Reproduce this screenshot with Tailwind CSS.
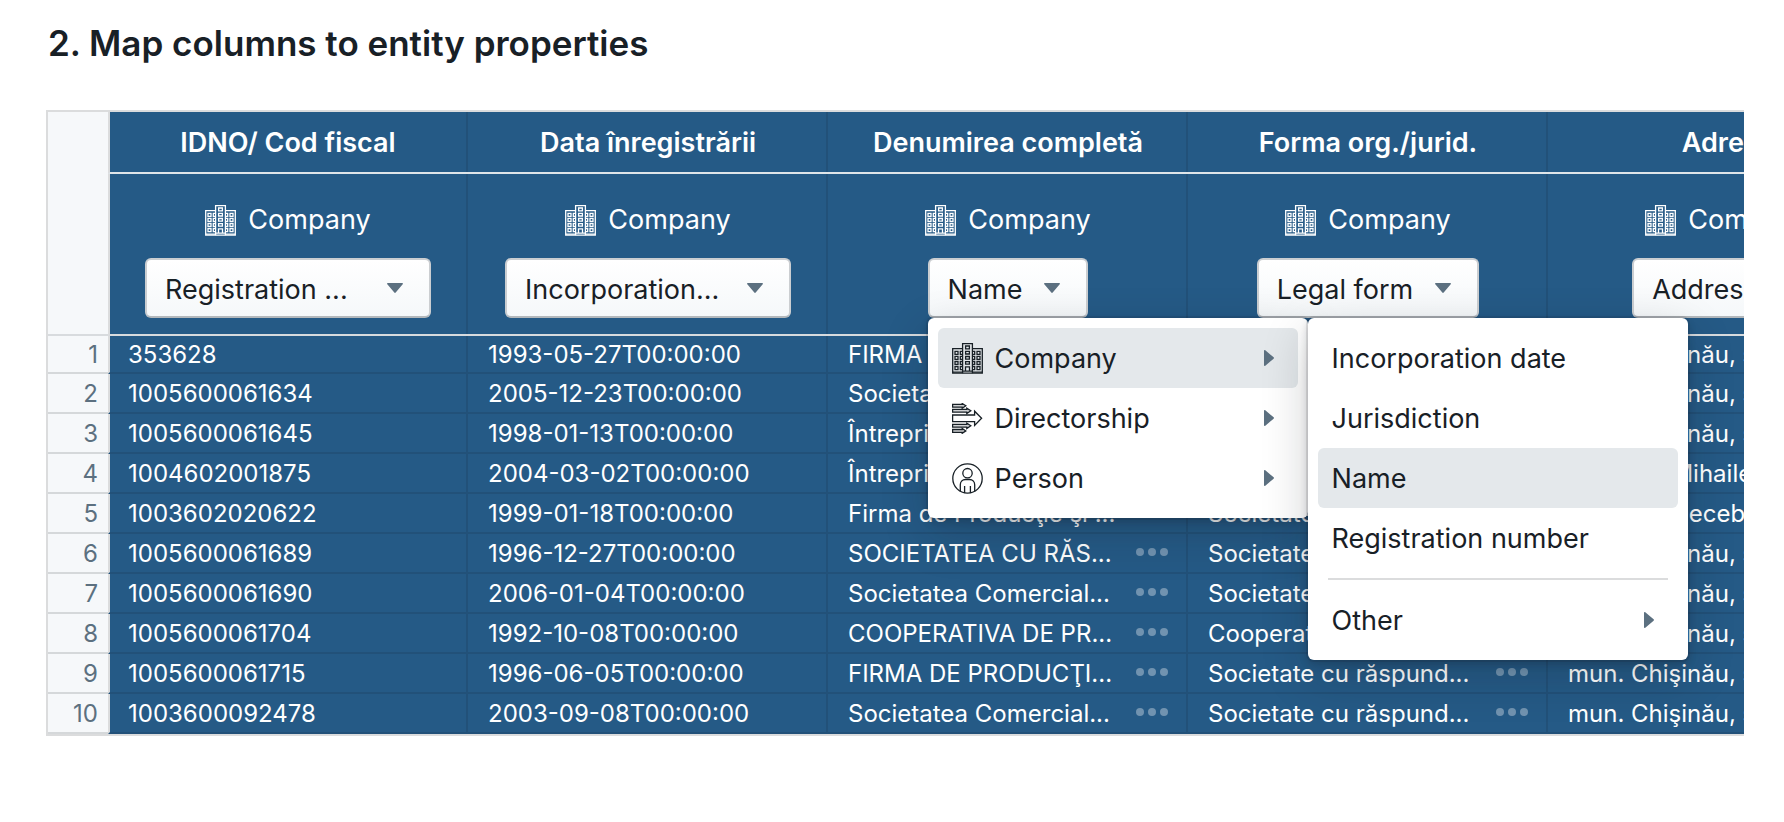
<!DOCTYPE html>
<html lang="en">
<head>
<meta charset="utf-8">
<title>Map columns to entity properties</title>
<script src="https://cdn.jsdelivr.net/npm/@tailwindcss/browser@4"></script>
</head>
<body class="bg-white font-['Inter','Noto_Sans',sans-serif] text-[27px] leading-9 text-[#182026]">

<svg class="hidden" aria-hidden="true">
  <symbol id="company" viewBox="0 0 31 31">
    <g fill="none" stroke="currentColor" stroke-width="1.3">
      <path d="M10.5 5.600H.7v24.600h29.600V5.600h-9.800"/>
      <path d="M10.600 30.200V.7h9.800v29.500M.7 29.200h9.900M20.400 29.200h9.900"/>
      <path d="M3 8.300h3v3H3zM3 13.300h3v3H3zM3 18.500h3v3H3zM3 23.600h3v3H3z"/>
      <path d="M25 8.300h3v3h-3zM25 13.300h3v3h-3zM25 18.500h3v3h-3zM25 23.600h3v3h-3z"/>
      <path d="M10.600 8.300H8.300v3h2.300M10.600 13.300H8.300v3h2.300M10.600 18.500H8.300v3h2.300M10.600 23.600H8.300v3h2.300"/>
      <path d="M20.400 8.300h2.300v3h-2.300M20.400 13.300h2.300v3h-2.300M20.400 18.500h2.300v3h-2.300M20.400 23.600h2.300v3h-2.300"/>
      <path d="M13.600 3h3.800v2.800h-3.800zM13.600 8.400h3.800v2.600h-3.800zM13.600 13.500h3.800v2.600h-3.800zM13.600 18.600h3.800v2.600h-3.800z"/>
      <path d="M13.500 28V23.800h4V28M11 28.200h9"/>
    </g>
  </symbol>
  <symbol id="directorship" viewBox="0 0 31 31">
    <g fill="none" stroke="currentColor" stroke-width="1.3" stroke-linejoin="miter">
      <path d="M.6 12h22V8.200l7 7.100-7 7.100v-3.800H.6z"/>
      <g fill="currentColor" fill-opacity=".2">
        <path d="M.6 1.400h9.600V.5l3.600 2.300-3.600 2.400v-1H.6z"/>
        <path d="M.6 6.300h14.200v-1.200l4 2.700-4 2.700V9.200H.6z"/>
        <path d="M.6 21.300h14.200v-1.200l4 2.700-4 2.700v-1.300H.6z"/>
        <path d="M.6 26.500h9.600v-1l3.600 2.400-3.600 2.400v-1H.6z"/>
      </g>
    </g>
  </symbol>
  <symbol id="person" viewBox="0 0 31 31">
    <g fill="none" stroke="currentColor" stroke-width="1.3">
      <circle cx="15.5" cy="15.5" r="14.7"/>
      <circle cx="15.5" cy="10.2" r="4.7"/>
      <path d="M8.300 28.400V21.800c0-3.200 2.200-5.300 5.200-5.300h4c3 0 5.200 2.100 5.200 5.300v6.600M12.600 23v7M18.400 23v7"/>
    </g>
  </symbol>
  <symbol id="caret-down" viewBox="0 0 16 10"><path fill="currentColor" d="M.8 0h14.400c.8 0 1 .8.5 1.300L8.700 9.600c-.4.5-1 .5-1.400 0L.3 1.300C-.2.8 0 0 .8 0z"/></symbol>
  <symbol id="caret-right" viewBox="0 0 10 16"><path fill="currentColor" d="M0 .8v14.400c0 .8.8 1 1.300.5L9.600 8.700c.5-.4.5-1 0-1.400L1.300.3C.8-.2 0 0 0 .8z"/></symbol>
  <symbol id="more" viewBox="0 0 32 8"><g fill="currentColor"><circle cx="4" cy="4" r="4"/><circle cx="16" cy="4" r="4"/><circle cx="28" cy="4" r="4"/></g></symbol>
</svg>

<main class="pt-6 pr-10 pl-[46px]">
  <h1 class="mb-12 pl-[2px] text-[35px] leading-[38px] font-semibold">2. Map columns to entity properties</h1>

  <div class="overflow-hidden border-2 border-r-0 border-[#dbdcdd]">
    <table class="w-[1860px] table-fixed border-separate border-spacing-0 text-white
      [&_thead_td]:border-b-2 [&_thead_td]:border-b-[#d8dbde] [&_thead_td]:bg-[#255a86] [&_thead_td]:px-0 [&_thead_td]:pt-7 [&_thead_td]:pb-4 [&_thead_td]:align-top [&_thead_td]:shadow-[inset_-2px_0_#225179]
      [&_thead_th]:h-[62px] [&_thead_th]:border-b-2 [&_thead_th]:border-b-[#dfe5e9] [&_thead_th]:bg-[#255a86] [&_thead_th]:pt-[2px] [&_thead_th]:font-semibold [&_thead_th]:shadow-[inset_-2px_0_#225179]
      [&_tbody]:text-2xl [&_tbody_td]:h-10 [&_tbody_td]:border-r-2 [&_tbody_td]:border-b-2 [&_tbody_td]:border-[#225179] [&_tbody_td]:bg-[#255a86] [&_tbody_td]:pt-[2px] [&_tbody_td]:pr-[18px] [&_tbody_td]:pl-5 [&_tbody_td]:leading-9 [&_tbody_td]:whitespace-nowrap
      [&_tbody_th]:border-b-2 [&_tbody_th]:border-[#d5d8da] [&_tbody_th]:bg-[#f6f8fa] [&_tbody_th]:pt-[2px] [&_tbody_th]:pr-[10px] [&_tbody_th]:text-right [&_tbody_th]:leading-9 [&_tbody_th]:font-normal [&_tbody_th]:text-[#5c7080]
      [&_tr>:nth-child(2)]:border-l-2 [&_tr>:nth-child(2)]:border-l-[#dbdcdd] [&_thead_tr>:nth-child(2)]:pr-[2px] [&_tbody_tr>:nth-child(2)]:pl-[18px]
      [&_tbody_tr:first-child>*]:h-[38px] [&_tbody_tr:first-child>*]:leading-[34px]">
      <colgroup><col class="w-[60px]"><col class="w-[360px]"><col class="w-[360px]"><col class="w-[360px]"><col class="w-[360px]"><col class="w-[360px]"></colgroup>
      <thead>
        <tr>
          <td class="!border-b-0 !bg-[#f6f8fa] !p-0 !shadow-none"></td>
          <th scope="col">IDNO/ Cod fiscal</th>
          <th scope="col">Data înregistrării</th>
          <th scope="col">Denumirea completă</th>
          <th scope="col">Forma org./jurid.</th>
          <th scope="col">Adresa</th>
        </tr>
        <tr>
          <td class="!bg-[#f6f8fa] !shadow-none"></td>
          <td>
            <div class="flex flex-col items-center gap-5">
              <div class="flex items-center gap-3"><svg class="size-[31px]"><use href="#company"/></svg>Company</div>
              <button type="button" aria-haspopup="menu" class="flex h-[60px] w-[286px] items-center justify-between rounded-md border-2 border-[#cbced1] border-b-[#b3b8bc] bg-linear-to-b from-white to-[#f5f8fa] pr-[26px] pl-[18px] text-[#182026]"><span class="pt-1">Registration ...</span><svg class="h-[10px] w-4 shrink-0 text-[#5c7080]"><use href="#caret-down"/></svg></button>
            </div>
          </td>
          <td>
            <div class="flex flex-col items-center gap-5">
              <div class="flex items-center gap-3"><svg class="size-[31px]"><use href="#company"/></svg>Company</div>
              <button type="button" aria-haspopup="menu" class="flex h-[60px] w-[286px] items-center justify-between rounded-md border-2 border-[#cbced1] border-b-[#b3b8bc] bg-linear-to-b from-white to-[#f5f8fa] pr-[26px] pl-[18px] text-[#182026]"><span class="pt-1">Incorporation...</span><svg class="h-[10px] w-4 shrink-0 text-[#5c7080]"><use href="#caret-down"/></svg></button>
            </div>
          </td>
          <td>
            <div class="flex flex-col items-center gap-5">
              <div class="flex items-center gap-3"><svg class="size-[31px]"><use href="#company"/></svg>Company</div>
              <div class="relative text-[#182026]">
                <button type="button" aria-haspopup="menu" aria-expanded="true" class="flex h-[60px] items-center rounded-md border-2 border-[#cbced1] border-b-[#b3b8bc] bg-linear-to-b from-white to-[#f5f8fa] pr-[26px] pl-[18px]"><span class="mr-[22px] pt-1">Name</span><svg class="h-[10px] w-4 shrink-0 text-[#5c7080]"><use href="#caret-down"/></svg></button>
                <div role="menu" aria-label="Entity" class="absolute top-full left-0 z-10 w-[380px] rounded-md bg-white p-[10px] shadow-[0_0_0_2px_rgb(16_22_26/0.1),0_4px_8px_rgb(16_22_26/0.2),0_16px_48px_rgb(16_22_26/0.2)] [&_span]:pt-[2px]">
                  <button type="button" role="menuitem" aria-haspopup="menu" aria-expanded="true" class="flex h-[60px] w-full items-center gap-3 rounded-md bg-[#e4e8eb] pr-6 pl-[14px] text-left"><svg class="size-[31px]"><use href="#company"/></svg><span class="grow">Company</span><svg class="h-4 w-[10px] text-[#5c7080]"><use href="#caret-right"/></svg></button>
                  <button type="button" role="menuitem" aria-haspopup="menu" class="flex h-[60px] w-full items-center gap-3 rounded-md pr-6 pl-[14px] text-left"><svg class="size-[31px]"><use href="#directorship"/></svg><span class="grow">Directorship</span><svg class="h-4 w-[10px] text-[#5c7080]"><use href="#caret-right"/></svg></button>
                  <button type="button" role="menuitem" aria-haspopup="menu" class="flex h-[60px] w-full items-center gap-3 rounded-md pr-6 pl-[14px] text-left"><svg class="size-[31px]"><use href="#person"/></svg><span class="grow">Person</span><svg class="h-4 w-[10px] text-[#5c7080]"><use href="#caret-right"/></svg></button>
                  <div role="menu" aria-label="Property" class="absolute top-0 left-full w-[380px] rounded-md bg-white p-[10px] shadow-[0_0_0_2px_rgb(16_22_26/0.1),0_4px_8px_rgb(16_22_26/0.2),0_16px_48px_rgb(16_22_26/0.2)]">
                    <button type="button" role="menuitem" class="flex h-[60px] w-full items-center rounded-md px-[14px]"><span>Incorporation date</span></button>
                    <button type="button" role="menuitem" class="flex h-[60px] w-full items-center rounded-md px-[14px]"><span>Jurisdiction</span></button>
                    <button type="button" role="menuitem" class="flex h-[60px] w-full items-center rounded-md bg-[#e4e8eb] px-[14px]"><span>Name</span></button>
                    <button type="button" role="menuitem" class="flex h-[60px] w-full items-center rounded-md px-[14px]"><span>Registration number</span></button>
                    <hr class="m-[10px] border-t-2 border-[#dbdcdd]">
                    <button type="button" role="menuitem" aria-haspopup="menu" class="flex h-[60px] w-full items-center justify-between rounded-md pr-6 pl-[14px]"><span>Other</span><svg class="h-4 w-[10px] text-[#5c7080]"><use href="#caret-right"/></svg></button>
                  </div>
                </div>
              </div>
            </div>
          </td>
          <td>
            <div class="flex flex-col items-center gap-5">
              <div class="flex items-center gap-3"><svg class="size-[31px]"><use href="#company"/></svg>Company</div>
              <button type="button" aria-haspopup="menu" class="flex h-[60px] max-w-[286px] items-center rounded-md border-2 border-[#cbced1] border-b-[#b3b8bc] bg-linear-to-b from-white to-[#f5f8fa] pr-[26px] pl-[18px] text-[#182026]"><span class="mr-[22px] pt-1">Legal form</span><svg class="h-[10px] w-4 shrink-0 text-[#5c7080]"><use href="#caret-down"/></svg></button>
            </div>
          </td>
          <td>
            <div class="flex flex-col items-center gap-5">
              <div class="flex items-center gap-3"><svg class="size-[31px]"><use href="#company"/></svg>Company</div>
              <button type="button" aria-haspopup="menu" class="flex h-[60px] max-w-[286px] items-center rounded-md border-2 border-[#cbced1] border-b-[#b3b8bc] bg-linear-to-b from-white to-[#f5f8fa] pr-[26px] pl-[18px] text-[#182026]"><span class="mr-[22px] pt-1">Address</span><svg class="h-[10px] w-4 shrink-0 text-[#5c7080]"><use href="#caret-down"/></svg></button>
            </div>
          </td>
        </tr>
      </thead>
      <tbody>
        <tr><th scope="row">1</th><td>353628</td><td>1993-05-27T00:00:00</td><td>FIRMA</td><td>Societate</td><td>mun. Chişinău, str.</td></tr>
        <tr><th scope="row">2</th><td>1005600061634</td><td>2005-12-23T00:00:00</td><td>Societatea</td><td>Societate</td><td>mun. Chişinău, str.</td></tr>
        <tr><th scope="row">3</th><td>1005600061645</td><td>1998-01-13T00:00:00</td><td>Întreprinderea</td><td>Societate</td><td>mun. Chişinău, str.</td></tr>
        <tr><th scope="row">4</th><td>1004602001875</td><td>2004-03-02T00:00:00</td><td>Întreprinderea</td><td>Societate</td><td>sat Bălţi, Mihaileni</td></tr>
        <tr><th scope="row">5</th><td>1003602020622</td><td>1999-01-18T00:00:00</td><td>Firma de Producţie şi ...</td><td>Societate</td><td>sat Bălţi, Decebal</td></tr>
        <tr><th scope="row">6</th><td>1005600061689</td><td>1996-12-27T00:00:00</td><td><div class="flex items-center justify-between">SOCIETATEA CU RĂS...<svg class="mb-1 h-2 w-8 text-white/35"><use href="#more"/></svg></div></td><td>Societate</td><td>mun. Chişinău, str.</td></tr>
        <tr><th scope="row">7</th><td>1005600061690</td><td>2006-01-04T00:00:00</td><td><div class="flex items-center justify-between">Societatea Comercial...<svg class="mb-1 h-2 w-8 text-white/35"><use href="#more"/></svg></div></td><td>Societate</td><td>mun. Chişinău, str.</td></tr>
        <tr><th scope="row">8</th><td>1005600061704</td><td>1992-10-08T00:00:00</td><td><div class="flex items-center justify-between">COOPERATIVA DE PR...<svg class="mb-1 h-2 w-8 text-white/35"><use href="#more"/></svg></div></td><td>Cooperativa</td><td>mun. Chişinău, str.</td></tr>
        <tr><th scope="row">9</th><td>1005600061715</td><td>1996-06-05T00:00:00</td><td><div class="flex items-center justify-between">FIRMA DE PRODUCŢI...<svg class="mb-1 h-2 w-8 text-white/35"><use href="#more"/></svg></div></td><td><div class="flex items-center justify-between">Societate cu răspund...<svg class="mb-1 h-2 w-8 text-white/35"><use href="#more"/></svg></div></td><td>mun. Chişinău, str.</td></tr>
        <tr><th scope="row">10</th><td>1003600092478</td><td>2003-09-08T00:00:00</td><td><div class="flex items-center justify-between">Societatea Comercial...<svg class="mb-1 h-2 w-8 text-white/35"><use href="#more"/></svg></div></td><td><div class="flex items-center justify-between">Societate cu răspund...<svg class="mb-1 h-2 w-8 text-white/35"><use href="#more"/></svg></div></td><td>mun. Chişinău, str.</td></tr>
      </tbody>
    </table>
  </div>
</main>
</body>
</html>
